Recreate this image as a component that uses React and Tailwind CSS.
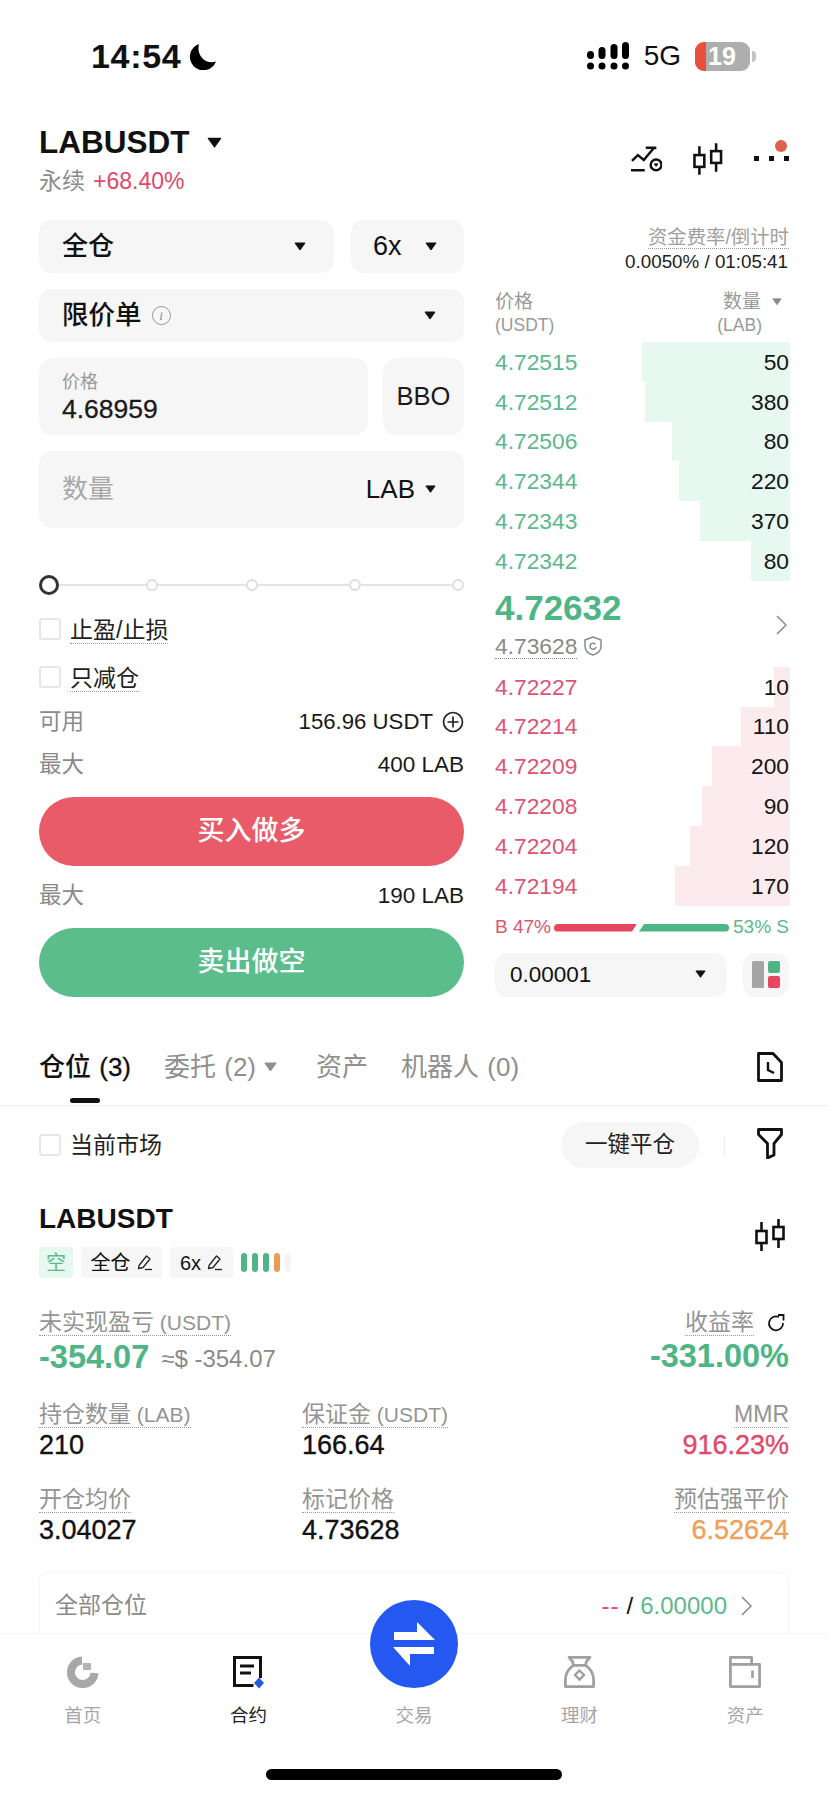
const asks = [
  ['4.72515', '50', 148],
  ['4.72512', '380', 145],
  ['4.72506', '80', 118],
  ['4.72344', '220', 111],
  ['4.72343', '370', 90],
  ['4.72342', '80', 39],
];
const bids = [
  ['4.72227', '10', 16],
  ['4.72214', '110', 49],
  ['4.72209', '200', 78],
  ['4.72208', '90', 88],
  ['4.72204', '120', 100],
  ['4.72194', '170', 115],
];

function Caret({ className = '', size = 14, color = '#111' }) {
  return (
    <svg width={size} height={size * 0.75} viewBox="0 0 12 9" className={className}>
      <path d="M1 1h10L6 8z" fill={color} stroke={color} strokeLinejoin="round" />
    </svg>
  );
}

function Candles({ className = '' }) {
  return (
    <svg width="30" height="32" viewBox="0 0 30 32" fill="none" stroke="#111" strokeWidth="2.6" className={className}>
      <rect x="1.5" y="12" width="10" height="12" />
      <rect x="18.5" y="8" width="10" height="12" />
      <path d="M6.5 3v9M6.5 24v8M23.5 0v8M23.5 20v9" />
    </svg>
  );
}

function Pencil() {
  return (
    <svg width="17" height="17" viewBox="0 0 17 17" fill="none" stroke="#222" strokeWidth="1.3">
      <path d="M3 11.5 10.5 2l3.5 3-7 8.5-4.500 1z" strokeLinejoin="round" />
      <path d="M9 15.500h7" />
    </svg>
  );
}

function Box() {
  return <span className="w-[22px] h-[22px] rounded-[3px] border-2 border-[#e6e6e6] bg-white shrink-0" />;
}

function Label({ children, suffix, className = '' }) {
  return (
    <span className={`inline-block h-[26px] leading-[25px] text-[23px] text-[#949494] border-b border-dotted border-[#9a9a9a] whitespace-nowrap ${className}`}>
      {children}
      {suffix ? <span className="text-[21px]"> {suffix}</span> : null}
    </span>
  );
}

function BookRow({ price, qty, width, bar, text }) {
  return (
    <div className="relative h-[39.8px] flex items-center justify-between text-[22.800px]">
      <div className="absolute right-0 top-0 bottom-0" style={{ width, background: bar, marginRight: -1 }} />
      <span className="relative" style={{ color: text }}>{price}</span>
      <span className="relative text-[#151515]">{qty}</span>
    </div>
  );
}

function Stat({ label, suffix, value, valueClass = 'text-[#111]', right = false }) {
  return (
    <div className={`flex flex-col ${right ? 'items-end' : 'items-start'}`}>
      <Label suffix={suffix}>{label}</Label>
      <span className={`h-[33px] mt-[1px] leading-[33px] text-[27px] [-webkit-text-stroke:0.35px] ${valueClass}`}>{value}</span>
    </div>
  );
}

function NavItem({ icon, label, active }) {
  return (
    <div className="flex-1 flex flex-col items-center">
      <div className="h-[32px] flex items-center justify-center">{icon}</div>
      <span className={`mt-[16px] text-[18.500px] leading-[24px] ${active ? 'text-[#222]' : 'text-[#a6a6a6]'}`}>{label}</span>
    </div>
  );
}

export default function App() {
  return (
    <div className="relative w-[828px] h-[1795px] overflow-hidden bg-white text-[#111] [font-family:'Liberation_Sans','Noto_Sans_CJK_SC',sans-serif]">
      {/* status bar */}
      <div className="h-[112px] pl-[91px] pr-[72px] flex items-center justify-between">
        <div className="flex items-center gap-[8px]">
          <span className="text-[34px] font-semibold leading-none tracking-[0.7px]">14:54</span>
          <svg width="28" height="27" viewBox="0 0 28 27"><path d="M10 1a13.500 13.500 0 1 0 17 17.500C17 22 7 13 10 1z" fill="#000" /></svg>
        </div>
        <div className="flex items-center">
          <svg width="43" height="28" viewBox="0 0 43 28" fill="#000">
            <circle cx="3.500" cy="24" r="3.500" /><circle cx="15" cy="24" r="3.500" /><circle cx="27" cy="24" r="3.500" /><circle cx="38.500" cy="24" r="3.500" />
            <rect x="0" y="9" width="7" height="8" rx="3.500" /><rect x="11.500" y="5" width="7" height="12" rx="3.500" /><rect x="23.500" y="2" width="7" height="15" rx="3.500" /><rect x="35" y="0" width="7" height="17" rx="3.500" />
          </svg>
          <span className="ml-[14px] text-[28px] leading-none">5G</span>
          <div className="ml-[14px] relative w-[55px] h-[29px] rounded-[9px] bg-[#aeaeae] overflow-hidden flex items-center">
            <div className="w-[11px] h-full bg-[#e8503a]" />
            <span className="ml-[2px] text-[25px] font-bold text-white leading-none">19</span>
          </div>
          <div className="ml-[2px] w-[4px] h-[11px] rounded-r-full bg-[#c4c4c4]" />
        </div>
      </div>

      {/* header */}
      <div className="h-[108px] px-[39px] pt-[12px] flex justify-between">
        <div>
          <div className="flex items-center h-[38px]">
            <span className="text-[31.500px] font-bold leading-none">LABUSDT</span>
            <Caret className="ml-[17px]" size={15} />
          </div>
          <div className="flex items-center h-[30px] mt-[4px] text-[23px]">
            <span className="text-[#8c8c8c]">永续</span>
            <span className="ml-[8px] text-[#e0496c]">+68.40%</span>
          </div>
        </div>
        <div className="relative w-[158px] h-[31px] mt-[19px] flex items-center">
          <svg width="32" height="26" viewBox="0 0 32 26" fill="none" stroke="#111" strokeWidth="2.500">
            <path d="M0 24.500h14M1 15l6-6 6 5L23 2M15 1.500h9.500V3" />
            <circle cx="25.500" cy="19" r="5.500" />
            <path d="M23.500 18h4l-2 2.500z" fill="#111" strokeWidth="1" />
          </svg>
          <Candles className="ml-[31px]" />
          <div className="ml-[31px] flex gap-[10px] mt-[-1px]">
            <span className="w-[5px] h-[5px] bg-[#111]" />
            <span className="w-[5px] h-[5px] bg-[#111]" />
            <span className="w-[5px] h-[5px] bg-[#111]" />
          </div>
          <span className="absolute left-[144px] top-[-3px] w-[12px] h-[12px] rounded-full bg-[#e0604f]" />
        </div>
      </div>

      {/* trade panel */}
      <div className="px-[39px] flex justify-between">
        <div className="w-[425px] flex flex-col">
          <div className="flex gap-[17px]">
            <div className="h-[53px] flex-1 rounded-[13px] bg-[#f6f6f6] pl-[23px] pr-[28px] flex items-center justify-between text-[26px] font-medium">
              <span>全仓</span><Caret size={12} />
            </div>
            <div className="h-[53px] w-[113px] rounded-[13px] bg-[#f6f6f6] pl-[22px] pr-[27px] flex items-center justify-between text-[27px]">
              <span>6x</span><Caret size={12} />
            </div>
          </div>
          <div className="mt-[16px] h-[53px] rounded-[13px] bg-[#f6f6f6] pl-[23px] pr-[28px] flex items-center justify-between">
            <div className="flex items-center text-[26.500px] font-medium">
              <span>限价单</span>
              <span className="ml-[10px] w-[19px] h-[19px] rounded-full border border-[#999] text-[#888] text-[13px] italic font-['Liberation_Serif'] flex items-center justify-center">i</span>
            </div>
            <Caret size={12} />
          </div>
          <div className="mt-[16px] flex gap-[15px]">
            <div className="h-[77px] flex-1 rounded-[13px] bg-[#f6f6f6] pl-[23px] flex flex-col justify-center">
              <span className="text-[18px] leading-[24px] text-[#9a9a9a]">价格</span>
              <span className="text-[26.500px] leading-[30px] [-webkit-text-stroke:0.3px] text-[#1a1a1a]">4.68959</span>
            </div>
            <div className="h-[77px] w-[81px] rounded-[13px] bg-[#f6f6f6] flex items-center justify-center text-[25.500px] text-[#1a1a1a]">BBO</div>
          </div>
          <div className="mt-[16px] h-[77px] rounded-[13px] bg-[#f6f6f6] pl-[23px] pr-[28px] flex items-center justify-between">
            <span className="text-[26px] text-[#a8a8a8]">数量</span>
            <div className="flex items-center text-[26px]">
              <span>LAB</span><Caret className="ml-[10px]" size={11} />
            </div>
          </div>

          {/* slider */}
          <div className="relative mt-[47px] h-[20px] flex items-center justify-between">
            <div className="absolute left-[10px] right-[2px] top-[9px] h-[2px] bg-[#e4e4e4]" />
            <span className="relative w-[20px] h-[20px] rounded-full border-[3px] border-[#333] bg-white" />
            <span className="relative ml-[-4px] w-[12px] h-[12px] rounded-full border-2 border-[#dedede] bg-white" />
            <span className="relative ml-[-4px] w-[12px] h-[12px] rounded-full border-2 border-[#dedede] bg-white" />
            <span className="relative w-[12px] h-[12px] rounded-full border-2 border-[#dedede] bg-white" />
            <span className="relative w-[12px] h-[12px] rounded-full border-2 border-[#dedede] bg-white" />
          </div>

          <div className="mt-[23px] flex items-start gap-[9px]">
            <Box />
            <span className="h-[26px] leading-[24px] text-[23px] text-[#222] border-b border-dotted border-[#999]">止盈/止损</span>
          </div>
          <div className="mt-[22px] flex items-start gap-[9px]">
            <Box />
            <span className="h-[26px] leading-[25px] text-[23px] text-[#222] border-b border-dotted border-[#999]">只减仓</span>
          </div>

          <div className="mt-[15px] h-[30px] flex items-center justify-between">
            <span className="text-[22.500px] text-[#8a8a8a]">可用</span>
            <div className="flex items-center gap-[9px] text-[22.200px] text-[#1a1a1a]">
              <span>156.96 USDT</span>
              <svg width="22" height="22" viewBox="0 0 22 22" fill="none" stroke="#222" strokeWidth="1.700">
                <circle cx="11" cy="11" r="9.500" /><path d="M11 5.500v11M5.500 11h11" />
              </svg>
            </div>
          </div>
          <div className="mt-[13px] h-[30px] flex items-center justify-between">
            <span className="text-[22.500px] text-[#8a8a8a]">最大</span>
            <span className="text-[22.500px] text-[#1a1a1a]">400 LAB</span>
          </div>
          <div className="mt-[17px] h-[69px] rounded-full bg-[#e95b69] flex items-center justify-center text-[27px] font-medium text-white">买入做多</div>
          <div className="mt-[15px] h-[30px] flex items-center justify-between">
            <span className="text-[22.500px] text-[#8a8a8a]">最大</span>
            <span className="text-[22.500px] text-[#1a1a1a]">190 LAB</span>
          </div>
          <div className="mt-[17px] h-[69px] rounded-full bg-[#5cbd8c] flex items-center justify-center text-[27px] font-medium text-white">卖出做空</div>
        </div>

        {/* order book */}
        <div className="w-[294px] flex flex-col">
          <div className="pt-[8px] flex flex-col items-end">
            <span className="h-[21px] leading-[19px] text-[19.400px] text-[#a0a0a0] border-b border-dotted border-[#999]">资金费率/倒计时</span>
            <span className="mt-[3px] h-[20px] leading-[20px] text-[18.800px] text-[#222] mr-[1px]">0.0050% / 01:05:41</span>
          </div>
          <div className="mt-[18px] flex justify-between text-[#9a9a9a]">
            <div className="flex flex-col">
              <span className="h-[24px] leading-[24px] text-[19px]">价格</span>
              <span className="h-[22px] leading-[22px] text-[17.500px]">(USDT)</span>
            </div>
            <div className="flex flex-col items-end">
              <div className="h-[24px] flex items-center mr-[7px]">
                <span className="text-[19px]">数量</span>
                <Caret className="ml-[11px]" size={10} color="#8a8a8a" />
              </div>
              <span className="h-[22px] leading-[22px] text-[17.500px] mr-[27px]">(LAB)</span>
            </div>
          </div>
          <div className="mt-[6px]">
            {asks.map((r) => <BookRow key={r[0]} price={r[0]} qty={r[1]} width={r[2]} bar="#e7f8f1" text="#5cb88f" />)}
          </div>
          <div className="relative h-[86px]">
            <div className="h-[46px] pt-[7px] text-[35px] leading-[40px] font-bold text-[#4fb586]">4.72632</div>
            <div className="mt-[7px] flex items-start">
              <span className="h-[25px] leading-[24px] text-[22.800px] text-[#8a8a8a] border-b border-dotted border-[#8a8a8a]">4.73628</span>
              <svg width="18" height="20" viewBox="0 0 18 20" fill="none" stroke="#8a8a8a" strokeWidth="1.500" className="ml-[7px] mt-[2px]">
                <path d="M9 1 17 4v6c0 5-4 8-8 9-4-1-8-4-8-9V4z" strokeLinejoin="round" />
                <path d="M11.500 8.500A3 3 0 1 0 12 11" />
              </svg>
            </div>
            <svg width="11" height="20" viewBox="0 0 11 20" fill="none" stroke="#8a8a8a" strokeWidth="1.500" className="absolute right-[2px] top-[34px]">
              <path d="M1 1l9 9-9 9" />
            </svg>
          </div>
          <div>
            {bids.map((r) => <BookRow key={r[0]} price={r[0]} qty={r[1]} width={r[2]} bar="#fbebee" text="#de5475" />)}
          </div>
          <div className="mt-[10px] h-[24px] flex items-center text-[19px]">
            <span className="text-[#de5475] w-[59px] whitespace-nowrap">B 47%</span>
            <div className="w-[83px] h-[8px] bg-[#e5475f] rounded-l-full [clip-path:polygon(0_0,100%_0,94%_100%,0_100%)]" />
            <div className="ml-[2px] w-[90px] h-[8px] bg-[#4fb586] rounded-r-full [clip-path:polygon(6%_0,100%_0,100%_100%,0_100%)]" />
            <span className="ml-auto text-[#5cb88f] whitespace-nowrap">53% S</span>
          </div>
          <div className="mt-[13px] flex justify-between">
            <div className="w-[232px] h-[44px] rounded-[13px] bg-[#f6f6f6] pl-[15px] pr-[21px] flex items-center justify-between text-[22.500px]">
              <span>0.00001</span><Caret size={11} />
            </div>
            <div className="w-[46px] h-[44px] rounded-[13px] bg-[#f6f6f6] flex items-center justify-center">
              <svg width="28" height="27" viewBox="0 0 28 27">
                <rect x="0" y="0" width="12" height="27" rx="1.500" fill="#a6a6a6" />
                <rect x="16" y="0" width="12" height="12" rx="2" fill="#4fb586" />
                <rect x="16" y="15" width="12" height="12" rx="2" fill="#e5475f" />
              </svg>
            </div>
          </div>
        </div>
      </div>

      {/* tabs */}
      <div className="mt-[52px] px-[39px] h-[36px] flex items-center text-[26px] leading-none text-[#8f8f8f]">
        <span className="text-[#111] font-medium whitespace-nowrap">仓位 <span className="text-[26px] [-webkit-text-stroke:0.3px] ml-[1px]">(3)</span></span>
        <span className="ml-[33px] whitespace-nowrap">委托 <span className="text-[26px] ml-[1px]">(2)</span></span>
        <Caret className="ml-[8px]" size={13} color="#8f8f8f" />
        <span className="ml-[39px]">资产</span>
        <span className="ml-[33px] whitespace-nowrap">机器人 <span className="text-[26px] ml-[1px]">(0)</span></span>
        <svg width="26" height="30" viewBox="0 0 26 30" fill="none" stroke="#111" strokeWidth="2.800" className="ml-auto mr-[6px]">
          <path d="M1.500 1.500h14.500l8.500 9v18h-23z" strokeLinejoin="round" />
          <path d="M11 10v8l6 3" strokeWidth="2.400" />
        </svg>
      </div>
      <div className="ml-[70px] mt-[13px] w-[30px] h-[5px] rounded-full bg-[#111]" />
      <div className="mt-[2px] h-[1px] bg-[#f2f2f2]" />

      {/* filter row */}
      <div className="mt-[16px] pl-[39px] pr-[45px] h-[46px] flex items-center">
        <Box />
        <span className="ml-[9px] text-[23px] text-[#222]">当前市场</span>
        <div className="ml-auto w-[138px] h-[46px] rounded-full bg-[#f6f6f6] flex items-center justify-center text-[22.500px] text-[#222]">一键平仓</div>
        <div className="ml-[25px] w-[1px] h-[22px] bg-[#eeeeee]" />
        <svg width="26" height="31" viewBox="0 0 26 31" fill="none" stroke="#111" strokeWidth="2.800" className="ml-[32px] mt-[-4px]">
          <path d="M1.500 1.500h23v5L17 15.500V27l-6.500 3V15.500L1.500 6.500z" strokeLinejoin="round" />
        </svg>
      </div>

      {/* position */}
      <div className="mt-[34px] pl-[39px] pr-[43px] flex justify-between items-center">
        <div>
          <div className="h-[34px] leading-[34px] text-[28px] font-bold">LABUSDT</div>
          <div className="mt-[11px] h-[31px] flex items-center text-[20px]">
            <span className="w-[34px] h-full rounded-[3px] bg-[#e7f8f1] text-[#5cb88f] flex items-center justify-center">空</span>
            <span className="ml-[8px] w-[81px] h-full rounded-[3px] bg-[#f6f6f6] flex items-center justify-center gap-[5px]">全仓<Pencil /></span>
            <span className="ml-[8px] w-[63px] h-full rounded-[3px] bg-[#f6f6f6] flex items-center justify-center gap-[5px]">6x<Pencil /></span>
            <span className="ml-[8px] flex gap-[5px]">
              <span className="w-[6px] h-[19px] rounded-full bg-[#4fb586]" />
              <span className="w-[6px] h-[19px] rounded-full bg-[#4fb586]" />
              <span className="w-[6px] h-[19px] rounded-full bg-[#4fb586]" />
              <span className="w-[6px] h-[19px] rounded-full bg-[#ed9c55]" />
              <span className="w-[6px] h-[19px] rounded-full bg-[#f4f4f4]" />
            </span>
          </div>
        </div>
        <Candles className="mb-[10px]" />
      </div>

      {/* stats */}
      <div className="mt-[32px] px-[39px] flex justify-between">
        <div>
          <Label suffix="(USDT)">未实现盈亏</Label>
          <div className="mt-[1px] h-[38px] flex items-center">
            <span className="text-[32.500px] leading-[38px] font-bold text-[#4fb586]">-354.07</span>
            <span className="ml-[12px] mt-[4px] text-[24px] text-[#8a8a8a]">≈$ -354.07</span>
          </div>
        </div>
        <div className="flex flex-col items-end">
          <div className="flex items-start">
            <Label>收益率</Label>
            <svg width="18" height="18" viewBox="0 0 18 18" fill="none" stroke="#111" strokeWidth="1.800" className="ml-[13px] mt-[4px] mr-[4px]">
              <path d="M12 3A7 7 0 1 0 16 9" /><path d="M11 1h5.500v5.500" />
            </svg>
          </div>
          <div className="mt-[1px] h-[38px] flex items-center text-[32.500px] font-bold text-[#4fb586]">-331.00%</div>
        </div>
      </div>
      <div className="mt-[26px] pl-[39px] pr-[39px] grid grid-cols-[263px_1fr_auto]">
        <Stat label="持仓数量" suffix="(LAB)" value="210" />
        <Stat label="保证金" suffix="(USDT)" value="166.64" />
        <Stat label="MMR" value="916.23%" valueClass="text-[#e0496c]" right />
      </div>
      <div className="mt-[25px] pl-[39px] pr-[39px] grid grid-cols-[263px_1fr_auto]">
        <Stat label="开仓均价" value="3.04027" />
        <Stat label="标记价格" value="4.73628" />
        <Stat label="预估强平价" value="6.52624" valueClass="text-[#f0a05a]" right />
      </div>

      {/* all positions card */}
      <div className="mx-[39px] mt-[25px] h-[90px] rounded-[8px] border border-[#f4f4f4] pl-[15px] pr-[36px] pt-[16px] flex justify-between items-start">
        <span className="text-[23px] leading-[33px] text-[#8a8a8a]">全部仓位</span>
        <div className="flex items-center h-[33px] text-[24px]">
          <span className="text-[#e0496c] tracking-[1px]">--</span>
          <span className="ml-[7px]">/</span>
          <span className="ml-[7px] text-[#5cb88f]">6.00000</span>
          <svg width="11" height="20" viewBox="0 0 11 20" fill="none" stroke="#8a8a8a" strokeWidth="1.500" className="ml-[14px]">
            <path d="M1 1l9 9-9 9" />
          </svg>
        </div>
      </div>

      {/* bottom nav */}
      <div className="absolute left-0 right-0 bottom-0 h-[162px] bg-white border-t border-[#f6f6f6] pt-[22px]">
        <div className="flex">
          <NavItem label="首页" icon={
            <svg width="32" height="32" viewBox="0 0 32 32" fill="none">
              <path d="M15 4.500A11.800 11.800 0 1 0 27.500 17" stroke="#a8a8a8" strokeWidth="8" />
              <rect x="16" y="7" width="8" height="7" fill="#b4b4b4" />
            </svg>
          } />
          <NavItem label="合约" active icon={
            <svg width="33" height="33" viewBox="0 0 33 33" fill="none" className="ml-[2px]">
              <path d="M27.500 22V1.500H1.500v28h19" stroke="#111" strokeWidth="3" />
              <path d="M7 10h14M7 17h11" stroke="#111" strokeWidth="3" />
              <path d="M26 21.500l5 5.500-5 5.500-5-5.500z" fill="#2558e0" />
            </svg>
          } />
          <NavItem label="交易" icon={<div className="w-[33px] h-[32px]" />} />
          <NavItem label="理财" icon={
            <svg width="31" height="32" viewBox="0 0 31 32" fill="none" stroke="#a0a0a0" strokeWidth="2.800">
              <path d="M5 1.400h21l-3.500 4-1 4H9.500l-1-4z" strokeLinejoin="round" />
              <path d="M9.500 9.400C4 13 1.400 18 1.400 24c0 3 0 5 0 6.600h28.200V24C29.600 18 27 13 21.500 9.400" strokeLinejoin="round" />
              <path d="M15.500 14.500l4.500 4.500-4.500 4.500-4.500-4.500z" strokeWidth="2.400" />
            </svg>
          } />
          <NavItem label="资产" icon={
            <svg width="32" height="32" viewBox="0 0 32 32" fill="none" stroke="#a0a0a0" strokeWidth="2.800" strokeLinejoin="round">
              <path d="M1.400 30.600V1.400h21.200v7h8v22.200z" />
              <path d="M1.400 8.400h21.200" />
              <path d="M23.500 14.500v7.500" strokeWidth="2.600" />
            </svg>
          } />
        </div>
      </div>

      {/* centre trade button */}
      <div className="absolute left-[370px] top-[1600px] w-[88px] h-[88px] rounded-full bg-[#2558f0] flex items-center justify-center">
        <svg width="42" height="44" viewBox="0 0 42 44" fill="#fff">
          <path d="M1 10h23V0l18 18H1z" />
          <path d="M0 25h41v7H17v12z" />
        </svg>
      </div>

      {/* home indicator */}
      <div className="absolute left-[266px] top-[1769px] w-[296px] h-[11px] rounded-full bg-black" />
    </div>
  );
}
